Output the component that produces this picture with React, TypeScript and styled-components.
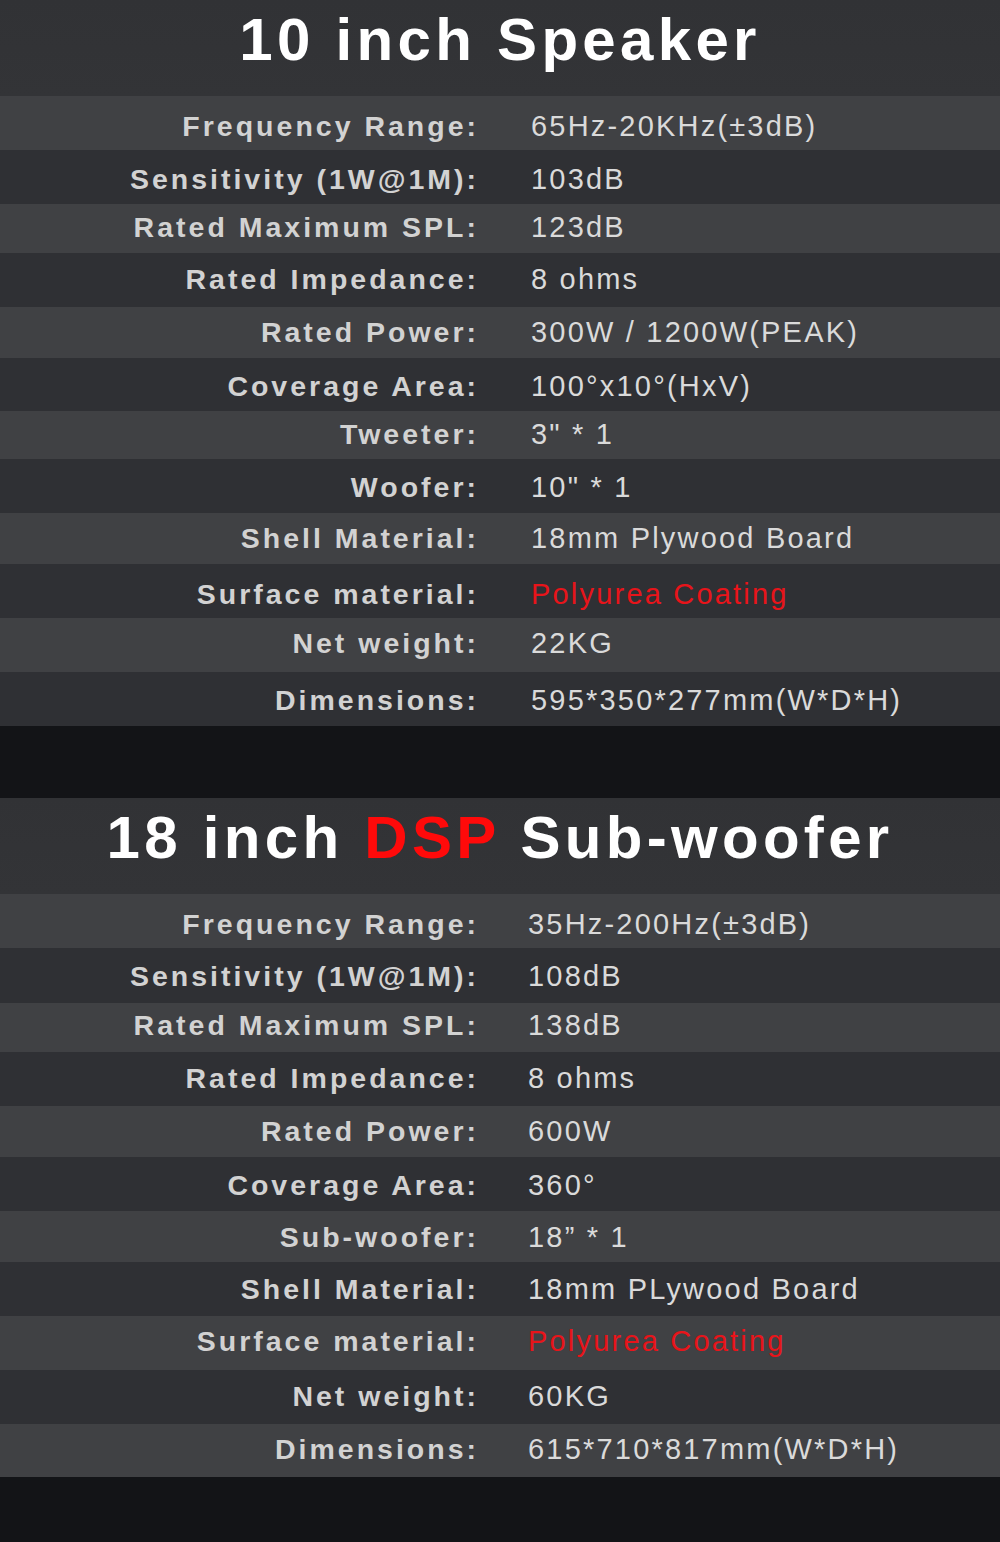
import React from 'react';
import styled, { createGlobalStyle } from 'styled-components';

const GlobalStyle = createGlobalStyle`
  html, body {
    margin: 0;
    padding: 0;
    background: #131417;
  }
  body {
    font-family: "Liberation Sans", Arial, sans-serif;
  }
`;

const Page = styled.div`
  width: 1000px;
  display: flex;
  flex-direction: column;
  background: #131417;
`;

const Section = styled.section`
  display: flex;
  flex-direction: column;
`;

const Header = styled.div`
  height: 96px;
  box-sizing: border-box;
  padding-top: 10px;
  display: flex;
  justify-content: center;
  align-items: flex-start;
  background: linear-gradient(180deg, #313235 0%, #333437 100%);
`;

const Title = styled.h1`
  margin: 0;
  font-size: 60px;
  line-height: 60px;
  font-weight: 700;
  letter-spacing: 4.3px;
  color: #ffffff;
  white-space: nowrap;
`;

const Accent = styled.span`
  color: #ff0a0a;
`;

// dy nudges the text a couple of pixels inside its band
const Row = styled.div<{ $h: number; $alt: boolean; $indent: number; $dy: number }>`
  height: ${(p) => p.$h}px;
  box-sizing: border-box;
  padding-top: ${(p) => (p.$dy > 0 ? p.$dy * 2 : 0)}px;
  padding-bottom: ${(p) => (p.$dy < 0 ? -p.$dy * 2 : 0)}px;
  display: grid;
  grid-template-columns: 479px 1fr;
  align-items: center;
  background: ${(p) => (p.$alt ? '#404144' : '#2f3034')};

  & > span:last-child {
    padding-left: ${(p) => p.$indent}px;
  }
`;

const Label = styled.span`
  text-align: right;
  font-size: 28.5px;
  line-height: 1;
  font-weight: 700;
  letter-spacing: 3px;
  color: #d2d2d2;
  white-space: nowrap;
`;

const Value = styled.span<{ $red?: boolean }>`
  font-size: 29px;
  line-height: 1;
  font-weight: 400;
  letter-spacing: 2.2px;
  color: ${(p) => (p.$red ? '#e8141a' : '#dadada')};
  white-space: nowrap;
`;

const Gap = styled.div<{ $h: number }>`
  height: ${(p) => p.$h}px;
  background: #131417;
`;

interface Spec {
  label: string;
  value: string;
  h: number;
  dy?: number;
  red?: boolean;
}

const speaker: Spec[] = [
  { label: 'Frequency Range:', value: '65Hz-20KHz(±3dB)', h: 54, dy: 3 },
  { label: 'Sensitivity (1W@1M):', value: '103dB', h: 54, dy: 2 },
  { label: 'Rated Maximum SPL:', value: '123dB', h: 49, dy: -1 },
  { label: 'Rated Impedance:', value: '8 ohms', h: 54, dy: -1 },
  { label: 'Rated Power:', value: '300W / 1200W(PEAK)', h: 51 },
  { label: 'Coverage Area:', value: '100°x10°(HxV)', h: 53, dy: 2 },
  { label: 'Tweeter:', value: '3" * 1', h: 48, dy: -1 },
  { label: 'Woofer:', value: '10" * 1', h: 54, dy: 1 },
  { label: 'Shell Material:', value: '18mm Plywood Board', h: 51 },
  { label: 'Surface material:', value: 'Polyurea Coating', h: 54, red: true, dy: 3 },
  { label: 'Net weight:', value: '22KG', h: 54, dy: -2 },
  { label: 'Dimensions:', value: '595*350*277mm(W*D*H)', h: 54, dy: 1 },
];

const sub: Spec[] = [
  { label: 'Frequency Range:', value: '35Hz-200Hz(±3dB)', h: 54, dy: 3 },
  { label: 'Sensitivity (1W@1M):', value: '108dB', h: 55, dy: 1 },
  { label: 'Rated Maximum SPL:', value: '138dB', h: 49, dy: -2 },
  { label: 'Rated Impedance:', value: '8 ohms', h: 54, dy: -1 },
  { label: 'Rated Power:', value: '600W', h: 51 },
  { label: 'Coverage Area:', value: '360°', h: 54, dy: 1 },
  { label: 'Sub-woofer:', value: '18” * 1', h: 51, dy: 1 },
  { label: 'Shell Material:', value: '18mm PLywood Board', h: 54 },
  { label: 'Surface material:', value: 'Polyurea Coating', h: 54, red: true, dy: -2 },
  { label: 'Net weight:', value: '60KG', h: 54, dy: -1 },
  { label: 'Dimensions:', value: '615*710*817mm(W*D*H)', h: 53, dy: -1 },
];

const SpecTable: React.FC<{ specs: Spec[]; indent: number }> = ({ specs, indent }) => (
  <div>
    {specs.map((s, i) => (
      <Row key={i} $h={s.h} $alt={i % 2 === 0} $indent={indent} $dy={s.dy ?? 0}>
        <Label>{s.label}</Label>
        <Value $red={s.red}>{s.value}</Value>
      </Row>
    ))}
  </div>
);

const App: React.FC = () => {
  return (
    <>
      <GlobalStyle />
      <Page>
        <Section>
          <Header>
            <Title>10 inch Speaker</Title>
          </Header>
          <SpecTable specs={speaker} indent={52} />
        </Section>
        <Gap $h={72} />
        <Section>
          <Header>
            <Title>
              18 inch <Accent>DSP</Accent> Sub-woofer
            </Title>
          </Header>
          <SpecTable specs={sub} indent={49} />
        </Section>
        <Gap $h={66} />
      </Page>
    </>
  );
};

export default App;
